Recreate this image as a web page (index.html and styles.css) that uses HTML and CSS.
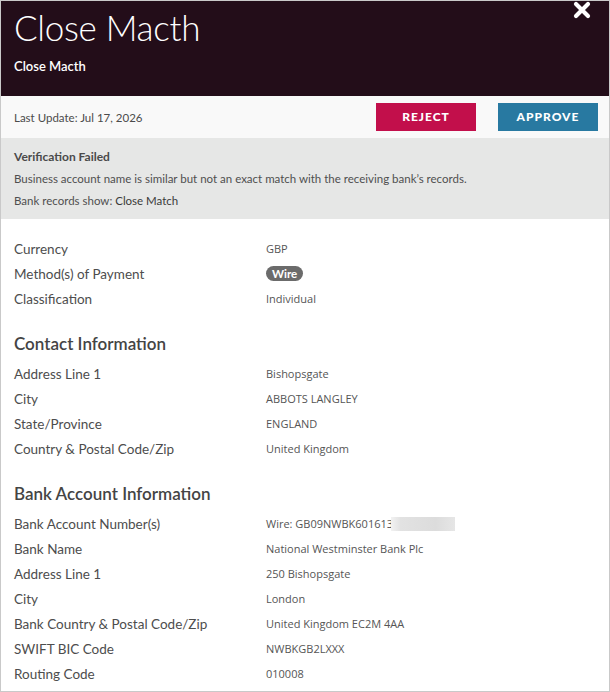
FILE: index.html
```html
<!DOCTYPE html>
<html>
<head lang="en">
    <meta charset="UTF-8">
    <title>Close Macth</title>
    <link rel="stylesheet" href="styles.css">
</head>
<body>
<div id="dialog">
    <div id="header">
        <h1>Close Macth</h1>
        <p>Close Macth</p>
        <span id="close">
            <svg width="18" height="18" viewBox="0 0 18 18">
                <path d="M3 3L15 15M15 3L3 15" stroke="#fff" stroke-width="4.2" stroke-linecap="round"/>
            </svg>
        </span>
    </div>

    <div id="toolbar">
        <span class="updated">Last Update: Jul 17, 2026</span>
        <div class="actions">
            <span class="btn reject">REJECT</span>
            <span class="btn approve">APPROVE</span>
        </div>
    </div>

    <div id="notice">
        <h4>Verification Failed</h4>
        <p>Business account name is similar but not an exact match with the receiving bank’s records.</p>
        <p>Bank records show: <span class="match">Close Match</span></p>
    </div>

    <div id="details">
        <ul class="rows">
            <li><span class="label">Currency</span><span class="value">GBP</span></li>
            <li><span class="label">Method(s) of Payment</span><span class="value"><span class="pill">Wire</span></span></li>
            <li><span class="label">Classification</span><span class="value">Individual</span></li>
        </ul>

        <h3>Contact Information</h3>
        <ul class="rows">
            <li><span class="label">Address Line 1</span><span class="value">Bishopsgate</span></li>
            <li><span class="label">City</span><span class="value">ABBOTS LANGLEY</span></li>
            <li><span class="label">State/Province</span><span class="value">ENGLAND</span></li>
            <li><span class="label">Country &amp; Postal Code/Zip</span><span class="value">United Kingdom</span></li>
        </ul>

        <h3>Bank Account Information</h3>
        <ul class="rows">
            <li><span class="label">Bank Account Number(s)</span><span class="value">Wire: GB09NWBK601613<span class="masked"></span></span></li>
            <li><span class="label">Bank Name</span><span class="value">National Westminster Bank Plc</span></li>
            <li><span class="label">Address Line 1</span><span class="value">250 Bishopsgate</span></li>
            <li><span class="label">City</span><span class="value">London</span></li>
            <li><span class="label">Bank Country &amp; Postal Code/Zip</span><span class="value">United Kingdom EC2M 4AA</span></li>
            <li><span class="label">SWIFT BIC Code</span><span class="value">NWBKGB2LXXX</span></li>
            <li><span class="label">Routing Code</span><span class="value">010008</span></li>
        </ul>
    </div>
</div>
</body>
</html>
```

FILE: styles.css
```css
*{
    margin:0;
    padding:0;
    box-sizing:border-box;
}
ul{
    list-style:none;
}
body{
    font-family:Lato, "Open Sans", sans-serif;
    color:#4a4a4a;
    background:#fff;
}
#dialog{
    width:610px;
    height:692px;
    border:1px solid #c9c9c9;
    overflow:hidden;
}
#header{
    position:relative;
    height:95px;
    background:#230d19;
    color:#fff;
    padding:6px 13px 0;
}
#header h1{
    font-weight:300;
    font-size:35px;
    line-height:40px;
    letter-spacing:-0.3px;
}
#header p{
    font-size:13px;
    font-weight:600;
    margin-top:11px;
}
#close{
    position:absolute;
    top:0;
    right:18px;
}
#toolbar{
    display:flex;
    justify-content:space-between;
    align-items:center;
    height:42px;
    background:#f9f9f9;
    padding:0 11px 0 13px;
}
.updated{
    font-size:11.5px;
    color:#4b4b4b;
}
.actions{
    display:flex;
    gap:22px;
}
.btn{
    display:block;
    width:100px;
    height:28px;
    line-height:28px;
    text-align:center;
    color:#fff;
    font-size:12px;
    font-weight:900;
    letter-spacing:1px;
}
.reject{
    background:#c20f4b;
}
.approve{
    background:#2879a1;
}
#notice{
    background:#e6e7e6;
    padding:8px 13px 7px;
    font-size:11.5px;
    line-height:22px;
    color:#4f4f4f;
}
#notice h4{
    font-size:12px;
    font-weight:700;
    color:#4a4a4a;
}
.match{
    color:#3a3a3a;
}
#details{
    padding:17px 13px 0;
}
#details h3{
    font-size:17px;
    font-weight:600;
    color:#444;
    margin:21px 0 5px;
    line-height:24px;
}
.rows li{
    display:flex;
    align-items:center;
    height:25px;
}
.label{
    width:252px;
    font-size:13.5px;
    color:#4d4d4d;
}
.value{
    font-family:"Open Sans", Lato, sans-serif;
    font-size:11px;
    color:#555;
    display:flex;
    align-items:center;
}
.pill{
    display:inline-block;
    background:#6b6b6b;
    color:#fff;
    font-family:Lato, sans-serif;
    font-weight:700;
    font-size:11.5px;
    line-height:15px;
    padding:0 6px;
    border-radius:8px;
}
/* blurred tail of the account number */
.masked{
    display:inline-block;
    margin-left:-2px;
    width:64px;
    height:14px;
    background:linear-gradient(90deg,#f2f2f2,#e2e2e2 15%,#dcdcdc 70%,#e6e6e6);
}
```
